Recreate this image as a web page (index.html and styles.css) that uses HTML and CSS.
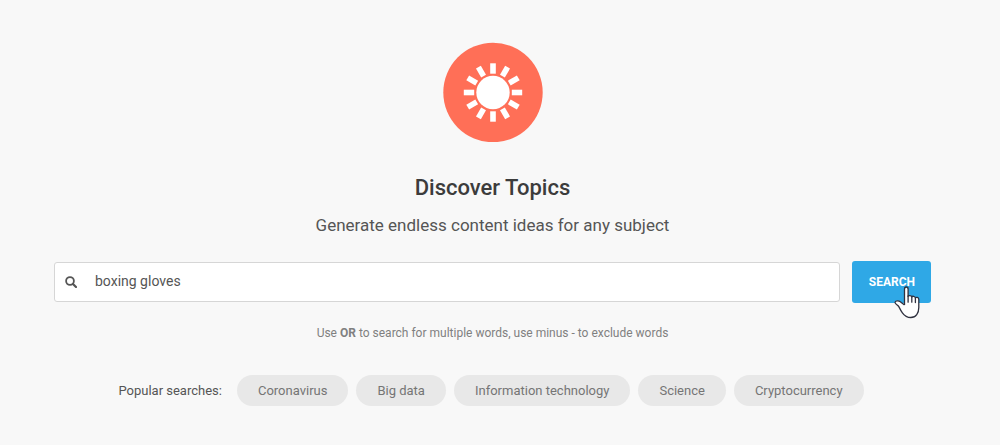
FILE: index.html
```html
<!DOCTYPE html>
<html lang="en">
<head>
<meta charset="utf-8">
<meta name="viewport" content="width=device-width, initial-scale=1">
<title>Discover Topics</title>
<link rel="stylesheet" href="styles.css">
</head>
<body>
<main class="discover">
  <svg class="sun-logo" viewBox="0 0 100 100" aria-hidden="true">
    <circle cx="50" cy="50.5" r="49.7" fill="#ff6f57"/>
    <circle cx="50" cy="50.5" r="16.7" fill="#fff"/>
    <g fill="#fff">
      <rect id="ray" x="47.2" y="21.3" width="5.6" height="10.4"/>
      <use href="#ray" transform="rotate(30 50 50.5)"/>
      <use href="#ray" transform="rotate(60 50 50.5)"/>
      <use href="#ray" transform="rotate(90 50 50.5)"/>
      <use href="#ray" transform="rotate(120 50 50.5)"/>
      <use href="#ray" transform="rotate(150 50 50.5)"/>
      <use href="#ray" transform="rotate(180 50 50.5)"/>
      <use href="#ray" transform="rotate(210 50 50.5)"/>
      <use href="#ray" transform="rotate(240 50 50.5)"/>
      <use href="#ray" transform="rotate(270 50 50.5)"/>
      <use href="#ray" transform="rotate(300 50 50.5)"/>
      <use href="#ray" transform="rotate(330 50 50.5)"/>
    </g>
  </svg>
  <h1 class="title">Discover Topics</h1>
  <p class="subtitle">Generate endless content ideas for any subject</p>
  <form class="search" role="search">
    <label class="search-field">
      <svg class="search-icon" viewBox="0 0 12 12" aria-hidden="true">
        <circle cx="5" cy="5" r="3.9" fill="none" stroke="#555" stroke-width="1.8"/>
        <path d="M8 8l3 3" fill="none" stroke="#555" stroke-width="2.2" stroke-linecap="round"/>
      </svg>
      <input class="search-input" type="text" value="boxing gloves" aria-label="Search topics">
    </label>
    <div class="search-action">
      <button class="search-button" type="button">SEARCH</button>
      <svg class="pointer" viewBox="0 0 26 33" aria-hidden="true">
        <path d="M10.5 19V3.2C10.5 1.7 11.3 1 12.3 1S14.1 1.7 14.1 3.2V10.4C14.4 9.3 17.5 9.2 17.8 11C18.2 9.9 21.1 10 21.4 11.8C22.2 10.9 24.8 11.2 24.8 13.5V21.5C24.8 27 22 31.5 16.8 31.5C12.5 31.5 10.4 29.6 8.4 26.8C7 24.9 5.8 22.6 4.8 20.6C3.8 18.7 1.2 18.4 1 16.5C1.3 14.6 4.4 14.4 6.3 15.7L10.5 19" fill="#fff" stroke="#303240" stroke-width="1.3" stroke-linejoin="round"/>
        <path d="M14.1 9.8v6.4M17.8 11v5.2M21.4 11.8v4.7" fill="none" stroke="#303240" stroke-width="1.3" stroke-linecap="round"/>
      </svg>
    </div>
  </form>
  <p class="hint">Use <b>OR</b> to search for multiple words, use minus - to exclude words</p>
  <div class="popular">
    <span class="popular-label">Popular searches:</span>
    <button class="pill" type="button">Coronavirus</button>
    <button class="pill" type="button">Big data</button>
    <button class="pill" type="button">Information technology</button>
    <button class="pill" type="button">Science</button>
    <button class="pill" type="button">Cryptocurrency</button>
  </div>
</main>
</body>
</html>
```
FILE: styles.css
```css
* {
  box-sizing: border-box;
}

body {
  margin: 0;
  background: #f8f8f8;
  color: #555;
  font-family: Roboto, "Liberation Sans", sans-serif;
}

.discover {
  display: flex;
  flex-direction: column;
  align-items: center;
  padding: 42px 69px 38px 54px;
}

.sun-logo {
  width: 100px;
  height: 100px;
}

.title {
  margin: 30px 0 0;
  color: #3c3c3c;
  font-size: 22px;
  font-weight: 500;
  line-height: 32px;
}

.subtitle {
  margin: 9px 0 0;
  font-size: 17px;
  line-height: 24px;
}

.search {
  display: flex;
  align-items: center;
  gap: 12px;
  align-self: stretch;
  margin-top: 24px;
}

.search-field {
  display: flex;
  flex: 1;
  align-items: center;
  gap: 18px;
  height: 40px;
  padding: 0 10px;
  border: 1px solid #d6d6d6;
  border-radius: 3px;
  background: #fff;
}

.search-icon {
  width: 12px;
  height: 12px;
}

.search-input {
  flex: 1;
  min-width: 0;
  padding: 0 0 2px;
  border: 0;
  outline: 0;
  background: transparent;
  color: #555;
  font-family: inherit;
  font-size: 14px;
  line-height: 20px;
}

.search-action {
  position: relative;
}

.search-button {
  display: block;
  height: 42px;
  padding: 0 16px 0 17px;
  border: 0;
  border-radius: 3px;
  background: #2fa8e6;
  color: #fff;
  font-family: inherit;
  font-size: 12px;
  font-weight: 700;
}

.pointer {
  position: absolute;
  top: 25px;
  right: 11px;
  width: 26px;
  height: 33px;
}

.hint {
  margin: 20px 0 0;
  color: #808080;
  font-size: 12px;
  line-height: 20px;
}

.popular {
  display: flex;
  flex-wrap: wrap;
  align-items: center;
  justify-content: center;
  gap: 8px;
  margin-top: 32px;
  padding-right: 3px;
}

.popular-label {
  margin-right: 7px;
  font-size: 13px;
}

.pill {
  height: 31px;
  padding: 0 21px;
  border: 0;
  border-radius: 16px;
  background: #e8e8e8;
  color: #757575;
  font-family: inherit;
  font-size: 13px;
}
```
